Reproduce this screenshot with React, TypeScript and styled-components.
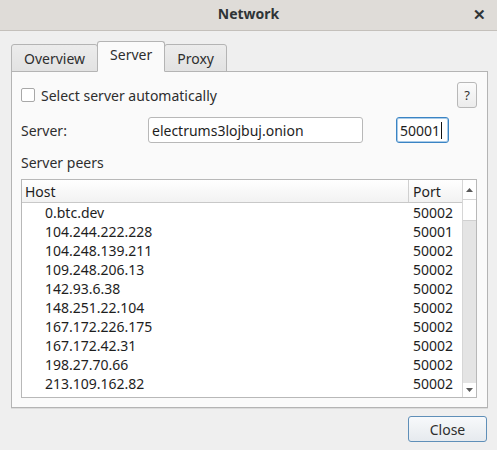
import React from "react";
import styled, { createGlobalStyle } from "styled-components";

const GlobalStyle = createGlobalStyle`
  html, body {
    margin: 0;
    padding: 0;
    background: #efefef;
  }
  * {
    box-sizing: border-box;
  }
`;

const Window = styled.div`
  width: 497px;
  height: 450px;
  display: flex;
  flex-direction: column;
  background: #efefef;
  font-family: "Noto Sans", "Open Sans", sans-serif;
  font-size: 14px;
  color: #2e3436;
  overflow: hidden;
`;

const TitleBar = styled.div`
  height: 31px;
  flex: none;
  display: flex;
  align-items: center;
  justify-content: center;
  position: relative;
  padding-bottom: 4px;
  background: #dfdcd8;
  border-bottom: 1px solid #c4c0bb;
  font-weight: bold;
  font-size: 14px;
  color: #2e3436;
`;

const CloseX = styled.span`
  position: absolute;
  right: 11px;
  top: 4px;
  font-size: 15px;
  font-weight: bold;
  color: #2e3436;
`;

const Body = styled.div`
  flex: 1;
  display: flex;
  flex-direction: column;
  padding: 11px 9px 0 11px;
`;

const TabBar = styled.div`
  display: flex;
  align-items: flex-end;
  height: 30px;
  position: relative;
  z-index: 1;
  margin-bottom: -1px;
`;

const Tab = styled.div<{ $active?: boolean }>`
  height: ${(p) => (p.$active ? "31px" : "28px")};
  padding: 0 12px;
  display: flex;
  align-items: center;
  justify-content: center;
  border: 1px solid #b4b4b4;
  border-bottom: ${(p) => (p.$active ? "1px solid #fafafa" : "1px solid #b4b4b4")};
  border-radius: 3px 3px 0 0;
  margin-left: ${(p) => (p.$active ? "-1px" : "0")};
  margin-right: ${(p) => (p.$active ? "-1px" : "0")};
  background: ${(p) =>
    p.$active ? "#fafafa" : "linear-gradient(#ececec, #e2e2e2)"};
  padding-bottom: ${(p) => (p.$active ? "4px" : "0")};
  color: #2e2e2e;
  position: relative;
  z-index: ${(p) => (p.$active ? 2 : 1)};
`;

const Pane = styled.div`
  height: 337px;
  background: #fafafa;
  border: 1px solid #b4b4b4;
  box-shadow: 0 1px 0 #dcdcdc;
  padding: 10px 10px 9px 9px;
  display: flex;
  flex-direction: column;
`;

const Row = styled.div<{ $h: number; $mt?: number }>`
  display: flex;
  align-items: center;
  height: ${(p) => p.$h}px;
  margin-top: ${(p) => p.$mt ?? 0}px;
  flex: none;
`;

const CheckBox = styled.span`
  width: 14px;
  height: 14px;
  border: 1px solid #a8a8a8;
  border-radius: 2px;
  background: #ffffff;
  margin-right: 6px;
  flex: none;
`;

const Label = styled.span<{ $w?: number }>`
  width: ${(p) => (p.$w ? `${p.$w}px` : "auto")};
  flex: none;
  color: #2e2e2e;
`;

const Spacer = styled.div<{ $w?: number }>`
  flex: ${(p) => (p.$w ? "none" : "1")};
  width: ${(p) => (p.$w ? `${p.$w}px` : "auto")};
`;

const HelpButton = styled.div`
  width: 20px;
  height: 26px;
  border: 1px solid #b8b8b8;
  border-radius: 3px;
  background: linear-gradient(#fbfbfb, #ececec);
  display: flex;
  align-items: center;
  justify-content: center;
  font-size: 13px;
  color: #333;
`;

const TextInput = styled.div<{ $w: number; $focus?: boolean }>`
  width: ${(p) => p.$w}px;
  height: 26px;
  background: #ffffff;
  border: 1px solid ${(p) => (p.$focus ? "#3a84c4" : "#b8b8b8")};
  box-shadow: ${(p) => (p.$focus ? "inset 0 0 0 1px #a9cbe8" : "none")};
  border-radius: 3px;
  padding-left: 3px;
  display: flex;
  align-items: center;
  color: #1e1e1e;
  flex: none;
`;

const Caret = styled.span`
  display: inline-block;
  width: 1px;
  height: 17px;
  background: #111;
  margin-left: 1px;
`;

const Table = styled.div`
  margin-top: 7px;
  height: 219px;
  flex: none;
  border: 1px solid #b8b8b8;
  background: #ffffff;
  display: flex;
  overflow: hidden;
`;

const TableMain = styled.div`
  flex: 1;
  display: flex;
  flex-direction: column;
  min-width: 0;
`;

const HeaderRow = styled.div`
  display: grid;
  grid-template-columns: 386px 1fr;
  height: 23px;
  flex: none;
  background: linear-gradient(#ffffff, #f2f2f2);
  border-bottom: 1px solid #c8c8c8;
`;

const HeaderCell = styled.div<{ $divider?: boolean }>`
  display: flex;
  align-items: center;
  padding-left: ${(p) => (p.$divider ? "4px" : "3px")};
  border-left: ${(p) => (p.$divider ? "1px solid #d0d0d0" : "none")};
  color: #1e1e1e;
`;

const Rows = styled.div`
  flex: 1;
  overflow: hidden;
`;

const DataRow = styled.div`
  display: grid;
  grid-template-columns: 386px 1fr;
  height: 19px;
  line-height: 19px;
  color: #1e1e1e;
`;

const HostCell = styled.div`
  padding-left: 23px;
  white-space: nowrap;
`;

const PortCell = styled.div`
  padding-left: 5px;
`;

const ScrollBar = styled.div`
  width: 14px;
  flex: none;
  display: flex;
  flex-direction: column;
  border-left: 1px solid #d6d6d6;
  background: #ffffff;
`;

const Arrow = styled.div<{ $h: number }>`
  height: ${(p) => p.$h}px;
  display: flex;
  align-items: center;
  justify-content: center;
  flex: none;
`;

const Thumb = styled.div`
  height: 22px;
  flex: none;
  background: #ffffff;
  border-top: 1px solid #d6d6d6;
  border-bottom: 1px solid #d0d0d0;
`;

const Track = styled.div`
  flex: 1;
  background: #e4e4e4;
`;

const Footer = styled.div`
  display: flex;
  justify-content: flex-end;
  padding: 8px 1px 0 0;
`;

const Button = styled.div`
  width: 79px;
  height: 26px;
  border: 1px solid #5f8fb8;
  border-radius: 3px;
  background: linear-gradient(#f7f9fb, #e6eaee);
  display: flex;
  align-items: center;
  justify-content: center;
  color: #2e2e2e;
`;

const peers: [string, string][] = [
  ["0.btc.dev", "50002"],
  ["104.244.222.228", "50001"],
  ["104.248.139.211", "50002"],
  ["109.248.206.13", "50002"],
  ["142.93.6.38", "50002"],
  ["148.251.22.104", "50002"],
  ["167.172.226.175", "50002"],
  ["167.172.42.31", "50002"],
  ["198.27.70.66", "50002"],
  ["213.109.162.82", "50002"],
  ["2AZZARITA.duckdns.org", "50002"],
];

const Triangle = ({ up }: { up?: boolean }) => (
  <svg width="7" height="4" viewBox="0 0 7 4">
    <path d={up ? "M0 4 L3.5 0 L7 4 Z" : "M0 0 L3.5 4 L7 0 Z"} fill="#5a5a5a" />
  </svg>
);

export default function App() {
  return (
    <Window>
      <GlobalStyle />
      <TitleBar>
        Network
        <CloseX>✕</CloseX>
      </TitleBar>
      <Body>
        <TabBar>
          <Tab>Overview</Tab>
          <Tab $active>Server</Tab>
          <Tab>Proxy</Tab>
        </TabBar>
        <Pane>
          <Row $h={26}>
            <CheckBox />
            <Label>Select server automatically</Label>
            <Spacer />
            <HelpButton>?</HelpButton>
          </Row>
          <Row $h={26} $mt={9}>
            <Label $w={127}>Server:</Label>
            <TextInput $w={215}>electrums3lojbuj.onion</TextInput>
            <Spacer $w={33} />
            <TextInput $w={53} $focus>
              50001
              <Caret />
            </TextInput>
          </Row>
          <Row $h={20} $mt={9}>
            <Label>Server peers</Label>
          </Row>
          <Table>
            <TableMain>
              <HeaderRow>
                <HeaderCell>Host</HeaderCell>
                <HeaderCell $divider>Port</HeaderCell>
              </HeaderRow>
              <Rows>
                {peers.map(([host, port]) => (
                  <DataRow key={host}>
                    <HostCell>{host}</HostCell>
                    <PortCell>{port}</PortCell>
                  </DataRow>
                ))}
              </Rows>
            </TableMain>
            <ScrollBar>
              <Arrow $h={19}>
                <Triangle up />
              </Arrow>
              <Thumb />
              <Track />
              <Arrow $h={14}>
                <Triangle />
              </Arrow>
            </ScrollBar>
          </Table>
        </Pane>
        <Footer>
          <Button>Close</Button>
        </Footer>
      </Body>
    </Window>
  );
}
